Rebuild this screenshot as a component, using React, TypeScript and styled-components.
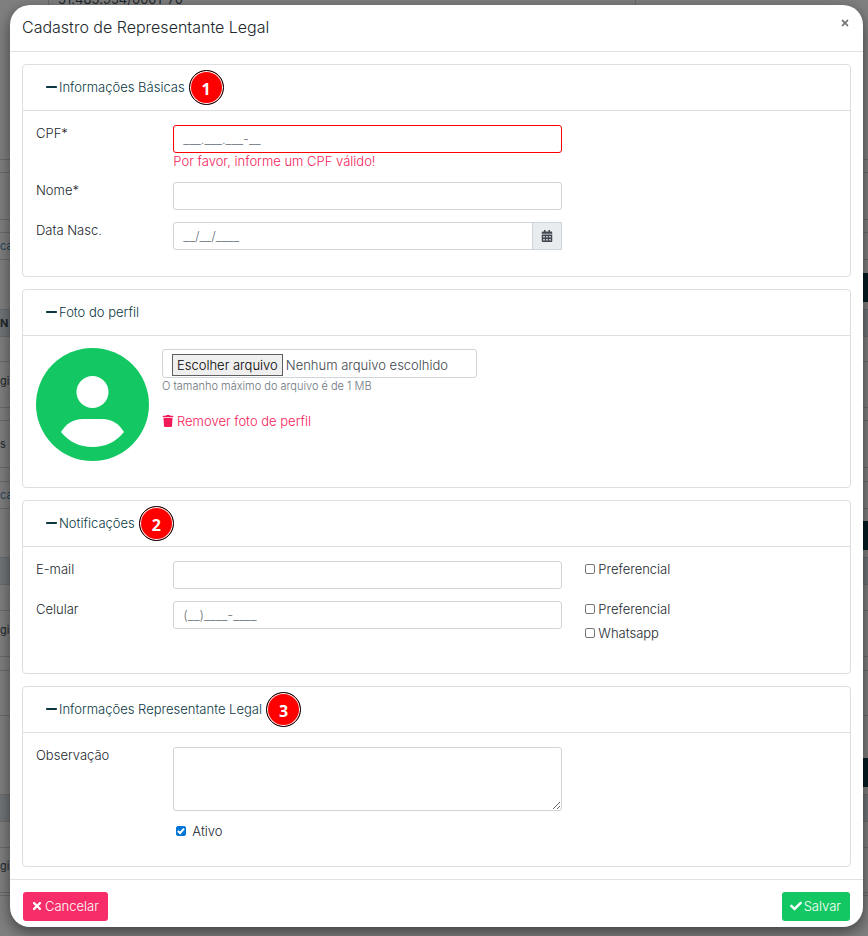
import React, { useState } from "react";
import styled, { createGlobalStyle, css } from "styled-components";
import { FaCalendarAlt, FaCheck, FaTimes, FaTrash } from "react-icons/fa";

const GlobalStyle = createGlobalStyle`
  *, *::before, *::after { box-sizing: border-box; }
  body {
    margin: 0;
    background: #808080;
    color: #22282d;
    font-family: Inter, "Liberation Sans", sans-serif;
    font-size: 13px;
    font-weight: 300;
    line-height: 16px;
  }
  button, input, textarea { font: inherit; color: inherit; }
`;

const Stage = styled.div`
  display: grid;
  grid-template-columns: minmax(0, 1fr);
  overflow: hidden;
  min-height: 100vh;
`;

/* ---------- page behind the dialog ---------- */

const Backdrop = styled.div`
  grid-area: 1 / 1;
  display: flex;
  flex-direction: column;
  height: 100vh;
  overflow: hidden;
  color: #22282d;
  font-weight: 400;
`;

const BackRow = styled.div<{ $h: number; $band?: boolean; $raised?: boolean }>`
  flex: 0 0 ${(p) => p.$h}px;
  display: flex;
  align-items: center;
  justify-content: space-between;
  padding-bottom: ${(p) => (p.$raised ? 8 : 0)}px;
  border-bottom: 1px solid #6a6c6e;
  font-size: 11px;
  white-space: nowrap;
  ${(p) => p.$band && css`background: #727578; font-weight: 700;`}
`;

const BackTop = styled.div`
  flex: 0 0 160px;
  display: grid;
  grid-template-columns: 48px 588px 1fr;
  align-items: start;
  border-bottom: 1px solid #6a6c6e;
`;

const BackField = styled.div`
  grid-column: 2;
  height: 7px;
  display: flex;
  align-items: flex-end;
  padding-left: 9px;
  border: solid #6a6c6e;
  border-width: 0 1px;
`;

const BackText = styled.span<{ $blue?: boolean }>`
  color: ${(p) => (p.$blue ? "#26445a" : "inherit")};
`;

const BackButton = styled.span`
  align-self: flex-end;
  width: 8px;
  height: 29px;
  margin: 0 0 7px auto;
  background: #041c22;
`;

type Row = { h: number; text?: string; blue?: boolean; band?: boolean; button?: boolean; raised?: boolean };
const backRows: Row[] = [
  { h: 13 }, { h: 47 }, { h: 13 },
  { h: 27, text: "ca", blue: true },
  { h: 50, button: true },
  { h: 27, text: "N", band: true },
  { h: 25 },
  { h: 46, text: "gis", raised: true },
  { h: 13 },
  { h: 47, text: "s" },
  { h: 14 },
  { h: 27, text: "ca", blue: true },
  { h: 49, button: true },
  { h: 27, band: true },
  { h: 26 },
  { h: 46, text: "gis", raised: true },
  { h: 14 }, { h: 45 },
  { h: 79, button: true },
  { h: 27, band: true },
  { h: 26 },
  { h: 45, text: "gis", raised: true },
  { h: 3 }, { h: 60 },
];

/* ---------- dialog ---------- */

const Dialog = styled.section`
  grid-area: 1 / 1;
  position: relative;
  align-self: start;
  margin: 5px 5px 9px 10px;
  border-radius: 20px;
  background: #fff;
  box-shadow: 0 5px 15px rgba(0, 0, 0, 0.5);
`;

const DialogHeader = styled.header`
  display: flex;
  justify-content: space-between;
  align-items: flex-start;
  padding: 12px 12px 13px;
  border-bottom: 1px solid #dee2e6;
`;

const Title = styled.h1`
  margin: 0;
  font-size: 16px;
  line-height: 21px;
  font-weight: 300;
`;

const CloseButton = styled.button`
  display: flex;
  padding: 1px;
  border: 0;
  background: none;
  color: #777;
  font-size: 10px;
`;

const DialogBody = styled.div`
  display: flex;
  flex-direction: column;
  gap: 12px;
  padding: 12px;
`;

const DialogFooter = styled.footer`
  display: flex;
  justify-content: space-between;
  padding: 12px 13px 6px;
  border-top: 1px solid #dee2e6;
`;

const Action = styled.button<{ $tone: string }>`
  display: flex;
  align-items: center;
  gap: 2px;
  height: 29px;
  padding: 0 9px 2px 8px;
  border: 0;
  border-radius: 3px;
  background: ${(p) => p.$tone};
  color: #fff;
`;

const Card = styled.section`
  border: 1px solid #dcdee0;
  border-radius: 4px;
`;

const CardHeader = styled.header`
  display: flex;
  align-items: center;
  gap: 4px;
  height: 46px;
  padding-left: 23px;
  border-bottom: 1px solid #dcdee0;
`;

const CardToggle = styled.button`
  display: flex;
  align-items: center;
  gap: 2px;
  padding: 0 0 2px;
  border: 0;
  background: none;
  color: #0b3743;
`;

const Badge = styled.span`
  display: flex;
  align-items: center;
  justify-content: center;
  width: 35px;
  height: 35px;
  padding-top: 2px;
  border: 1px solid #000;
  border-radius: 50%;
  background: #f00;
  box-shadow: inset 0 0 0 1px #fff;
  color: #fff;
  font: 700 16px/20px "Open Sans", "Noto Sans", sans-serif;
`;

const CardBody = styled.div<{ $bottom: number }>`
  display: flex;
  flex-direction: column;
  gap: 12px;
  padding: 14px 2px ${(p) => p.$bottom}px 1px;
`;

const FormRow = styled.div`
  display: grid;
  grid-template-columns: 2fr 6fr 4fr;
  align-items: start;
`;

const Cell = styled.div`
  display: flex;
  flex-direction: column;
  gap: 8px;
  min-width: 0;
  padding: 0 11px 0 12px;
`;

const FieldLabel = styled.label`
  padding: 0 12px;
`;

const control = css`
  width: 100%;
  border: 1px solid #ced4da;
  border-radius: 3px;
  background: #fff;
  outline: 0;
`;

const TextInput = styled.input<{ $invalid?: boolean }>`
  ${control}
  height: 28px;
  padding: 0 9px;
  ${(p) => p.$invalid && css`border-color: #f00;`}
  &::placeholder { color: #6c757d; opacity: 1; }
`;

const NotesArea = styled.textarea`
  ${control}
  display: block;
  height: 64px;
  padding: 4px 9px;
  resize: vertical;
`;

const FieldError = styled.p`
  margin: -8px 0 0;
  line-height: 17px;
  color: #f31a5a;
`;

const InputGroup = styled.div`
  display: flex;
  ${TextInput} { flex: 1; min-width: 0; border-radius: 3px 0 0 3px; }
`;

const CalendarButton = styled.button`
  display: flex;
  align-items: center;
  justify-content: center;
  width: 30px;
  height: 28px;
  margin-left: -1px;
  padding: 0;
  border: 1px solid #ced4da;
  background: #e9ecef;
  color: #40474f;
  font-size: 12px;
`;

const CheckLabel = styled.label<{ $indented?: boolean }>`
  display: flex;
  align-items: center;
  gap: ${(p) => (p.$indented ? 6 : 3)}px;
  padding-left: ${(p) => (p.$indented ? 3 : 0)}px;
`;

const CheckInput = styled.input`
  appearance: none;
  display: grid;
  place-items: center;
  width: 10px;
  height: 10px;
  margin: 0;
  border: 1px solid #767676;
  border-radius: 2px;
  background: #fff;
  &:checked { border-color: #0075d8; background: #0075d8; }
  &:checked::before {
    content: "";
    width: 4px;
    height: 7px;
    margin-bottom: 2px;
    border: solid #fff;
    border-width: 0 2px 2px 0;
    transform: rotate(42deg);
  }
`;

const PhotoBody = styled.div`
  display: flex;
  gap: 13px;
  padding: 12px 13px 26px;
`;

const Avatar = styled.svg`
  flex: none;
  width: 113px;
  height: 113px;
`;

const PhotoFields = styled.div`
  display: flex;
  flex-direction: column;
  align-items: flex-start;
  padding-top: 1px;
`;

const FileBox = styled.div`
  display: flex;
  align-items: center;
  gap: 3px;
  width: 315px;
  height: 29px;
  padding: 2px 9px 0;
  border: 1px solid #ced4da;
  border-radius: 3px;
  color: #40474d;
`;

const FileInput = styled.input`
  position: absolute;
  width: 1px;
  height: 1px;
  opacity: 0;
`;

const FileButton = styled.label`
  padding: 2px 4px;
  border: 1px solid #5f5f5f;
  background: #efefef;
  color: #000;
`;

const HelpText = styled.small`
  font-size: 11px;
  line-height: 16px;
  color: #6c757d;
`;

const RemoveLink = styled.a`
  display: flex;
  align-items: center;
  gap: 3px;
  margin-top: 19px;
  color: #f31a5a;
  text-decoration: none;
`;

function MinusIcon() {
  return (
    <svg width="11" height="12" viewBox="0 0 11 12" aria-hidden="true">
      <rect x="0" y="5" width="11" height="2" rx="0.700" fill="currentColor" />
    </svg>
  );
}

function Section({ title, step, children }: { title: string; step?: number; children: React.ReactNode }) {
  const [open, setOpen] = useState(true);
  return (
    <Card>
      <CardHeader>
        <CardToggle type="button" aria-expanded={open} onClick={() => setOpen(!open)}>
          <MinusIcon />
          {title}
        </CardToggle>
        {step && <Badge>{step}</Badge>}
      </CardHeader>
      {open && children}
    </Card>
  );
}

function Check({ label, checked, indented }: { label: string; checked?: boolean; indented?: boolean }) {
  return (
    <CheckLabel $indented={indented}>
      <CheckInput type="checkbox" defaultChecked={checked} />
      {label}
    </CheckLabel>
  );
}

export default function App() {
  return (
    <>
      <GlobalStyle />
      <Stage>
        <Backdrop aria-hidden="true">
          <BackTop>
            <BackField>31.483.954/0001-70</BackField>
          </BackTop>
          {backRows.map((r, i) => (
            <BackRow key={i} $h={r.h} $band={r.band} $raised={r.raised}>
              {r.text && <BackText $blue={r.blue}>{r.text}</BackText>}
              {r.button && <BackButton />}
            </BackRow>
          ))}
        </Backdrop>

        <Dialog role="dialog" aria-labelledby="dialog-title">
          <DialogHeader>
            <Title id="dialog-title">Cadastro de Representante Legal</Title>
            <CloseButton type="button" aria-label="Fechar"><FaTimes /></CloseButton>
          </DialogHeader>

          <DialogBody>
            <Section title="Informações Básicas" step={1}>
              <CardBody $bottom={26}>
                <FormRow>
                  <FieldLabel htmlFor="cpf">CPF*</FieldLabel>
                  <Cell>
                    <TextInput id="cpf" $invalid placeholder="___.___.___-__" aria-describedby="cpf-error" />
                    <FieldError id="cpf-error">Por favor, informe um CPF válido!</FieldError>
                  </Cell>
                </FormRow>
                <FormRow>
                  <FieldLabel htmlFor="nome">Nome*</FieldLabel>
                  <Cell><TextInput id="nome" /></Cell>
                </FormRow>
                <FormRow>
                  <FieldLabel htmlFor="nasc">Data Nasc.</FieldLabel>
                  <Cell>
                    <InputGroup>
                      <TextInput id="nasc" placeholder="__/__/____" />
                      <CalendarButton type="button" aria-label="Abrir calendário"><FaCalendarAlt /></CalendarButton>
                    </InputGroup>
                  </Cell>
                </FormRow>
              </CardBody>
            </Section>

            <Section title="Foto do perfil">
              <PhotoBody>
                <Avatar viewBox="0 0 113 113" role="img" aria-label="Foto de perfil">
                  <circle cx="56.500" cy="56.500" r="56.500" fill="#13c862" />
                  <circle cx="56.500" cy="44" r="16" fill="#fff" />
                  <path d="M25 84C30 76 37 71 47 71H66C76 71 83 76 88 84C80 94 69 99 56.500 99S33 94 25 84Z" fill="#fff" />
                </Avatar>
                <PhotoFields>
                  <FileBox>
                    <FileInput id="foto" type="file" />
                    <FileButton htmlFor="foto">Escolher arquivo</FileButton>
                    <span>Nenhum arquivo escolhido</span>
                  </FileBox>
                  <HelpText>O tamanho máximo do arquivo é de 1 MB</HelpText>
                  <RemoveLink href="#remover"><FaTrash size={12} />Remover foto de perfil</RemoveLink>
                </PhotoFields>
              </PhotoBody>
            </Section>

            <Section title="Notificações" step={2}>
              <CardBody $bottom={32}>
                <FormRow>
                  <FieldLabel htmlFor="email">E-mail</FieldLabel>
                  <Cell><TextInput id="email" type="email" /></Cell>
                  <Cell><Check label="Preferencial" /></Cell>
                </FormRow>
                <FormRow>
                  <FieldLabel htmlFor="celular">Celular</FieldLabel>
                  <Cell><TextInput id="celular" placeholder="(__)____-____" /></Cell>
                  <Cell>
                    <Check label="Preferencial" />
                    <Check label="Whatsapp" />
                  </Cell>
                </FormRow>
              </CardBody>
            </Section>

            <Section title="Informações Representante Legal" step={3}>
              <CardBody $bottom={27}>
                <FormRow>
                  <FieldLabel htmlFor="obs">Observação</FieldLabel>
                  <Cell><NotesArea id="obs" /></Cell>
                </FormRow>
                <FormRow>
                  <span />
                  <Cell><Check label="Ativo" checked indented /></Cell>
                </FormRow>
              </CardBody>
            </Section>
          </DialogBody>

          <DialogFooter>
            <Action type="button" $tone="#f62d68"><FaTimes size={12} />Cancelar</Action>
            <Action type="button" $tone="#13c862"><FaCheck size={12} />Salvar</Action>
          </DialogFooter>
        </Dialog>
      </Stage>
    </>
  );
}
